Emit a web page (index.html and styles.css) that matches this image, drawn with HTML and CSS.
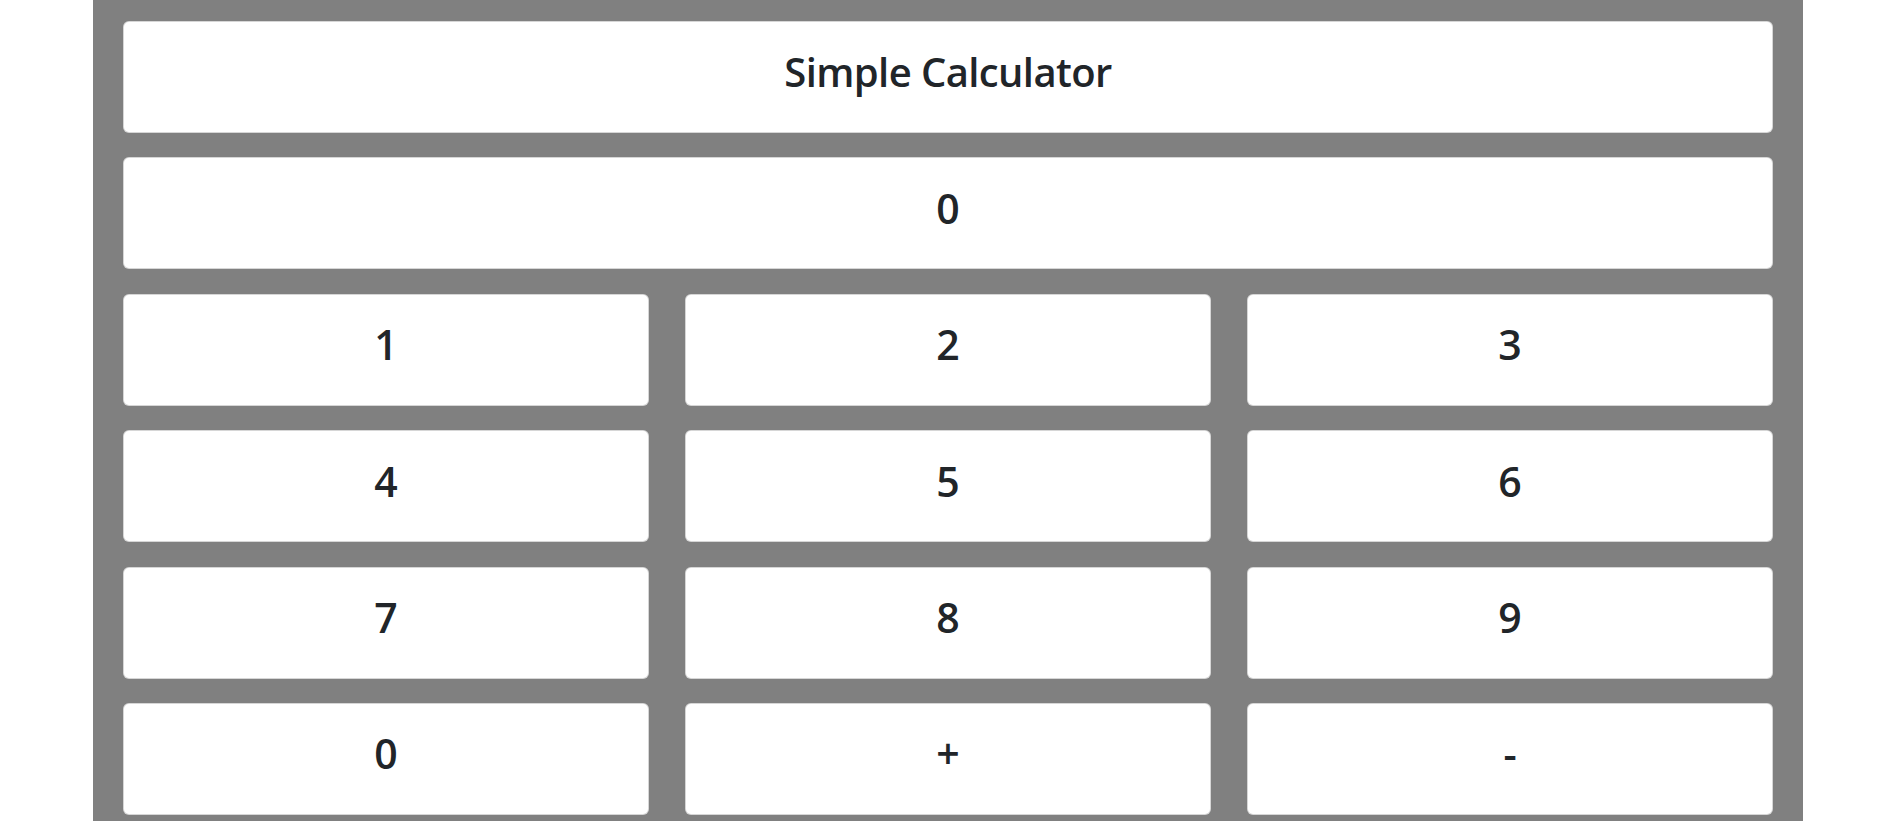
FILE: index.html
```html
<!DOCTYPE html>
<html lang="en">
<head>
<meta charset="utf-8">
<title>Simple Calculator</title>
<link rel="stylesheet" href="styles.css">
</head>
<body>
<main class="panel">
  <div class="card wide"><span class="title">Simple Calculator</span></div>
  <div class="card wide"><span class="label">0</span></div>
  <div class="card"><span class="label">1</span></div>
  <div class="card"><span class="label">2</span></div>
  <div class="card"><span class="label">3</span></div>
  <div class="card"><span class="label">4</span></div>
  <div class="card"><span class="label">5</span></div>
  <div class="card"><span class="label">6</span></div>
  <div class="card"><span class="label">7</span></div>
  <div class="card"><span class="label">8</span></div>
  <div class="card"><span class="label">9</span></div>
  <div class="card"><span class="label">0</span></div>
  <div class="card"><span class="label op">+</span></div>
  <div class="card"><span class="label op">-</span></div>
</main>
</body>
</html>
```
FILE: styles.css
```css
html, body {
  margin: 0;
  padding: 0;
  background: #ffffff;
  overflow: hidden;
}
body {
  font-family: "Open Sans", "Noto Sans", sans-serif;
  color: #212529;
}
.panel {
  box-sizing: border-box;
  width: 1710px;
  margin-left: 93px;
  min-height: 900px;
  background: #808080;
  padding: 21px 30px 30px;
  display: grid;
  grid-template-columns: repeat(3, 1fr);
  grid-auto-rows: 112px;
  column-gap: 36px;
  row-gap: 24.4px;
}
.card {
  box-sizing: border-box;
  background: #ffffff;
  border: 1px solid rgba(0, 0, 0, 0.16);
  border-radius: 6px;
  display: flex;
  align-items: center;
  justify-content: center;
  padding-bottom: 10px;
}
.wide {
  grid-column: 1 / -1;
}
.title, .label {
  font-size: 41px;
  font-weight: 600;
  line-height: 1.2;
}
.title {
  font-size: 40px;
  letter-spacing: -0.6px;
}
```
